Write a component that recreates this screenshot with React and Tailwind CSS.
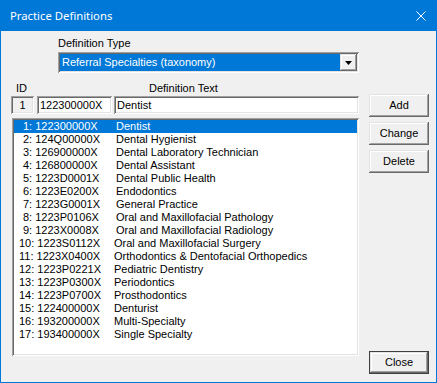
import React from "react";

const sunken =
  "shadow-[inset_1px_1px_0_#a0a0a0,inset_-1px_-1px_0_#ffffff,inset_2px_2px_0_#696969,inset_-2px_-2px_0_#e3e3e3]";
const raised =
  "shadow-[inset_-1px_-1px_0_#696969,inset_1px_1px_0_#e3e3e3,inset_-2px_-2px_0_#a0a0a0,inset_2px_2px_0_#ffffff]";

const rows = [
  ["1", "122300000X", "Dentist"],
  ["2", "124Q00000X", "Dental Hygienist"],
  ["3", "126900000X", "Dental Laboratory Technician"],
  ["4", "126800000X", "Dental Assistant"],
  ["5", "1223D0001X", "Dental Public Health"],
  ["6", "1223E0200X", "Endodontics"],
  ["7", "1223G0001X", "General Practice"],
  ["8", "1223P0106X", "Oral and Maxillofacial Pathology"],
  ["9", "1223X0008X", "Oral and Maxillofacial Radiology"],
  ["10", "1223S0112X", "Oral and Maxillofacial Surgery"],
  ["11", "1223X0400X", "Orthodontics & Dentofacial Orthopedics"],
  ["12", "1223P0221X", "Pediatric Dentistry"],
  ["13", "1223P0300X", "Periodontics"],
  ["14", "1223P0700X", "Prosthodontics"],
  ["15", "122400000X", "Denturist"],
  ["16", "193200000X", "Multi-Specialty"],
  ["17", "193400000X", "Single Specialty"],
];

function Button({ children, className = "" }) {
  return (
    <div className={`h-[23px] w-[60px] flex items-center justify-center bg-[#f0f0f0] text-black ${raised} ${className}`}>
      {children}
    </div>
  );
}

export default function App() {
  return (
    <div className="w-[437px] h-[383px] bg-[#0078d7] px-[1px] pb-[1px] flex flex-col font-['Liberation_Sans',Arial,sans-serif] text-[11px] leading-[13px] text-black">
      <div className="h-[31px] flex items-center justify-between pl-[9px] pr-[10px] text-white">
        <span className="text-[11.3px] font-['Noto_Sans',sans-serif] leading-[16px]">Practice Definitions</span>
        <svg width="10" height="10" viewBox="0 0 10 10">
          <path d="M0.5 0.5 L9.5 9.5 M9.5 0.5 L0.5 9.5" stroke="#fff" strokeWidth="1" />
        </svg>
      </div>
      <div className="flex-1 bg-[#f0f0f0] flex pl-[10px]">
        <div className="w-[348px] flex flex-col pt-[6px]">
          <div className="ml-[47px] h-[13px]">Definition Type</div>
          <div className={`ml-[47px] mt-[2px] w-[301px] h-[21px] bg-white p-[2px] flex ${sunken}`}>
            <div className="flex-1 bg-[#0078d7] text-white pl-[2px] flex items-center">Referral Specialties (taxonomy)</div>
            <div className={`w-[17px] h-[17px] bg-[#f0f0f0] flex items-center justify-center ${raised}`}>
              <svg width="7" height="4" viewBox="0 0 7 4">
                <path d="M0 0 H7 L3.5 4 Z" fill="#000" />
              </svg>
            </div>
          </div>
          <div className="mt-[9px] h-[13px] flex">
            <span className="ml-[5px]">ID</span>
            <span className="ml-[122px]">Definition Text</span>
          </div>
          <div className="mt-[1px] h-[18px] flex">
            <div className={`w-[23px] h-[18px] flex items-center justify-center bg-[#f0f0f0] ${sunken}`}>1</div>
            <div className={`ml-[3px] w-[75px] h-[18px] bg-white flex items-center pl-[3px] ${sunken}`}>122300000X</div>
            <div className={`ml-[2px] flex-1 h-[18px] bg-white flex items-center pl-[3px] ${sunken}`}>Dentist</div>
          </div>
          <div className={`mt-[4px] ml-[1px] h-[238px] bg-white p-[2px] ${sunken}`}>
            {rows.map(([n, code, label], i) => {
              const two = n.length > 1;
              return (
                <div
                  key={n}
                  className={`h-[13px] flex whitespace-nowrap ${i === 0 ? "bg-[#0078d7] text-white" : ""} ${two ? "pl-[5px]" : "pl-[9px]"}`}
                >
                  <span className={two ? "w-[95px]" : "w-[93px]"}>{`${n}: ${code}`}</span>
                  <span>{label}</span>
                </div>
              );
            })}
          </div>
        </div>
        <div className="ml-[10px] flex flex-col pt-[63px] pb-[8px]">
          <Button>Add</Button>
          <Button className="mt-[5px]">Change</Button>
          <Button className="mt-[5px]">Delete</Button>
          <div className="flex-1" />
          <Button className="border border-[#404040]">Close</Button>
        </div>
      </div>
    </div>
  );
}
